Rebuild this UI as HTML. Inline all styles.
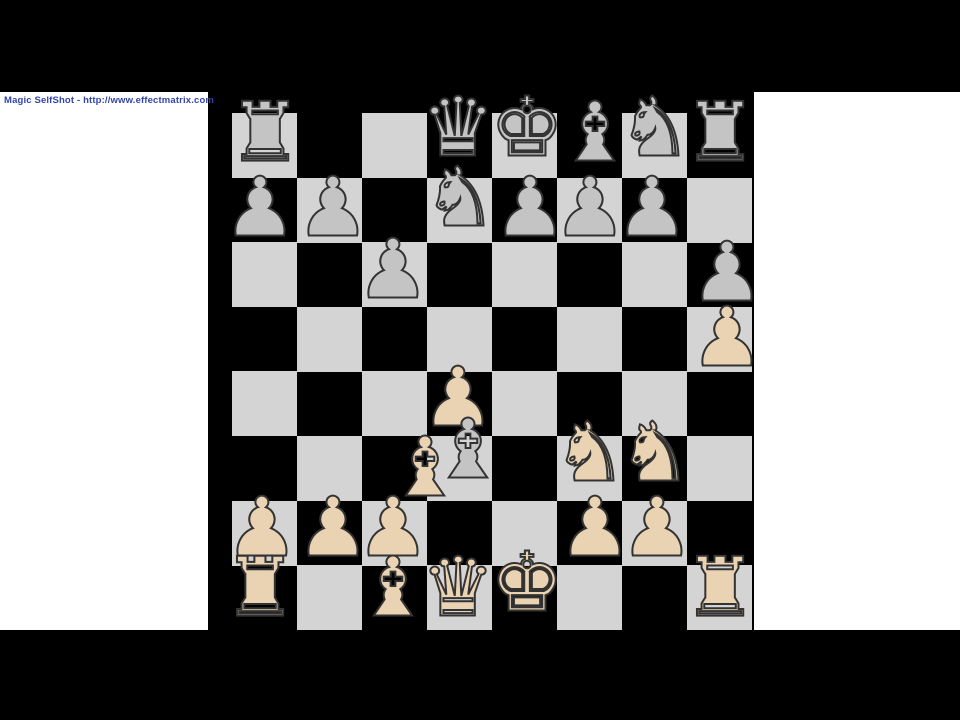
<!DOCTYPE html>
<html><head><meta charset="utf-8"><style>
body{margin:0;width:960px;height:720px;background:#000;position:relative;overflow:hidden;font-family:"DejaVu Sans",sans-serif}
.pn{position:absolute;background:#fff;top:92px;height:538px}
.sq{position:absolute;width:65px;height:65px;background:#d4d4d4}
.p{position:absolute;font-size:82px;line-height:1;transform:translate(-50%,-52%);-webkit-text-stroke:2px #333}
.g{color:#c4c4c4}.t{color:#ead3b2}
.txt{position:absolute;left:4px;top:95px;font:bold 9.5px "Liberation Sans",sans-serif;color:#3344aa;letter-spacing:0.15px;white-space:nowrap}
</style></head><body>
<div class="pn" style="left:0;width:208px"></div>
<div class="pn" style="left:754px;width:206px"></div>
<div class="txt">Magic SelfShot - http://www.effectmatrix.com</div>
<div id="b"></div>
<script>
var b=document.getElementById('b'),h='';
for(var r=0;r<8;r++)for(var c=0;c<8;c++)if((r+c)%2==0){var y=113+r*64.6;var hh=Math.min(65,630-y);h+='<div class="sq" style="left:'+(232+c*65)+'px;top:'+y+'px;height:'+hh+'px"></div>';}
var P=[
['g','♜',265,135],['g','♛',458,130],['g','♚',527,130],['g','♝',595,135],['g','♞',655,130],['g','♜',720,135],
['g','♟',260,210],['g','♟',333,210],['g','♞',460,200],['g','♟',530,210],['g','♟',590,210],['g','♟',652,210],
['g','♟',393,272],['g','♟',727,275],
['t','♟',727,340],['t','♟',458,400],['g','♝',468,452],['t','♝',425,470],['t','♞',590,455],['t','♞',655,455],
['t','♟',262,530],['t','♟',333,530],['t','♟',393,530],['t','♟',595,530],['t','♟',657,530],
['t','♜',260,590],['t','♝',393,590],['t','♛',458,590],['t','♚',527,585],['t','♜',720,590]];
P.forEach(function(q){h+='<div class="p '+q[0]+'" style="left:'+q[2]+'px;top:'+q[3]+'px">'+q[1]+'</div>';});
b.innerHTML=h;
</script>
</body></html>
